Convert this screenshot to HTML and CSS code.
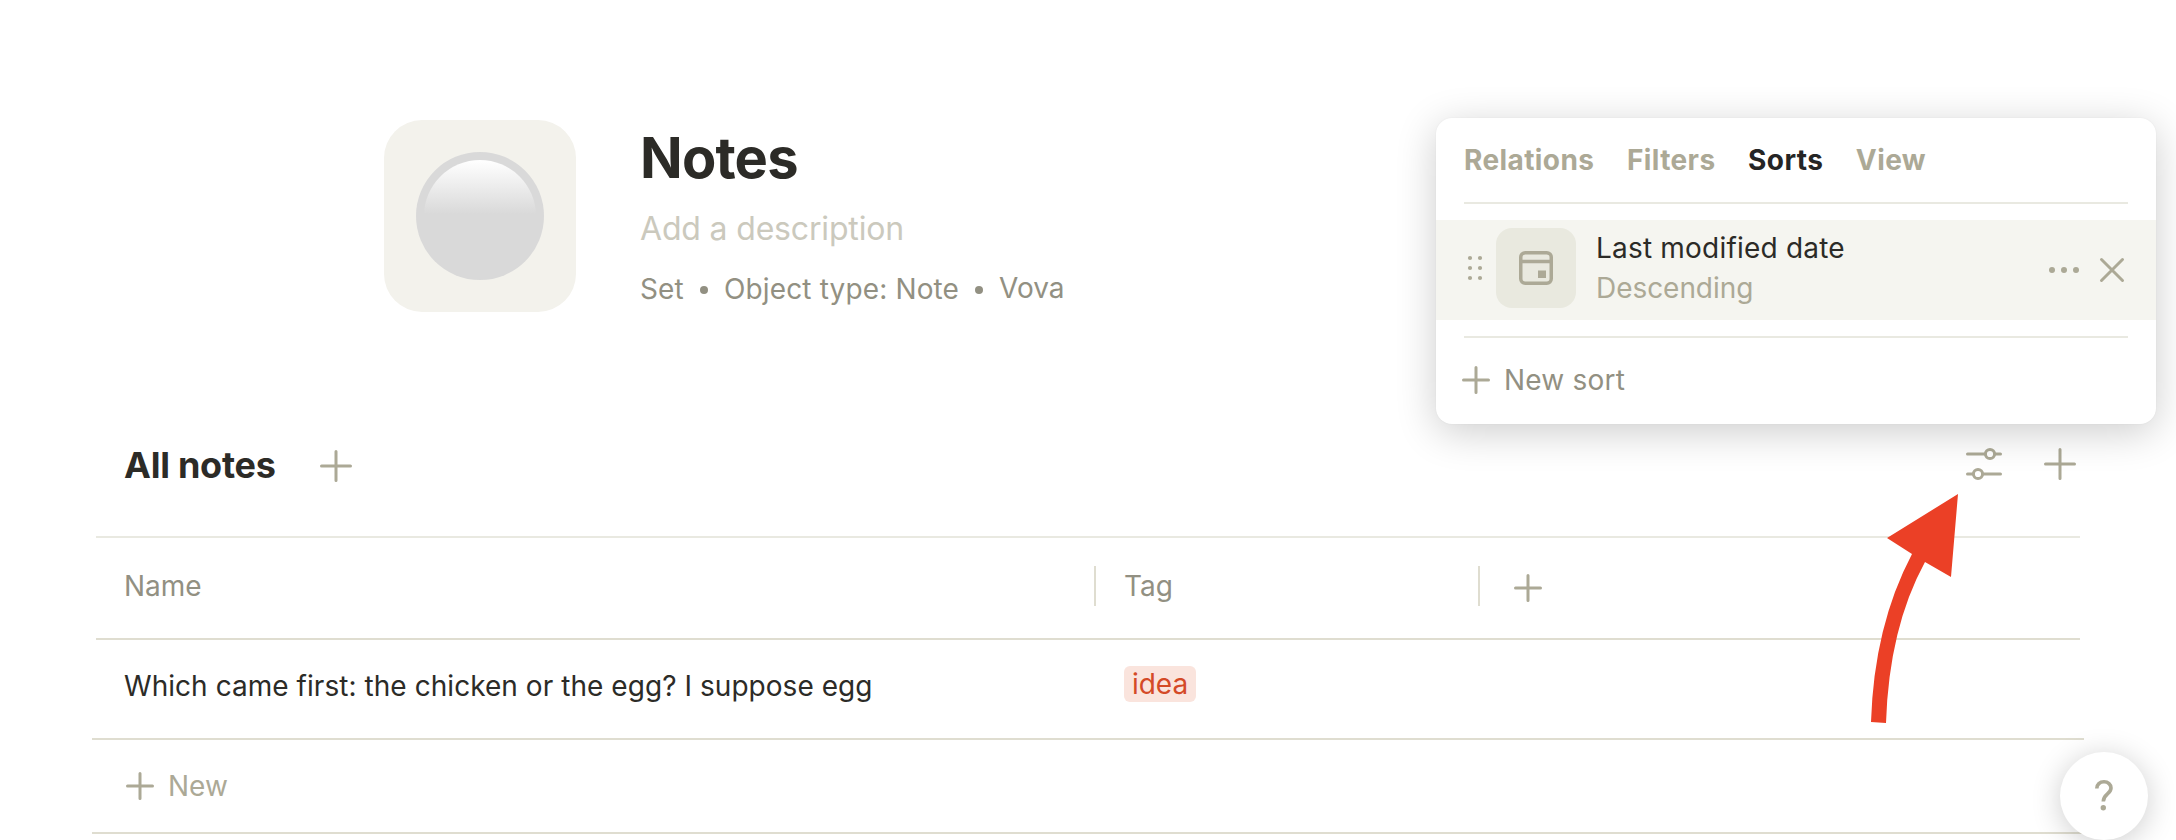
FILE: index.html
```html
<!DOCTYPE html>
<html lang="en">
<head>
<meta charset="utf-8">
<title>Notes</title>
<link rel="stylesheet" href="styles.css">
</head>
<body>
<header class="object">
  <div class="object-icon"><div class="ball"></div></div>
  <div class="object-info">
    <h1 class="title">Notes</h1>
    <p class="description">Add a description</p>
    <div class="meta"><span class="m-set">Set</span><i class="dot"></i><span class="m-type">Object type: Note</span><i class="dot"></i><span class="m-author">Vova</span></div>
  </div>
</header>

<main class="dataview">
  <div class="toolbar">
    <h2 class="view-name">All notes</h2>
    <svg class="plus-lg" viewBox="0 0 32 32"><path d="M16 1.500v29M1.500 16h29"/></svg>
    <span class="spacer"></span>
    <svg class="sliders" viewBox="0 0 36 34"><path d="M1.500 7h18M29 7h5.500M1.500 27h5.500M17 27h17.500"/><circle cx="24" cy="7" r="4.600"/><circle cx="12" cy="27" r="4.600"/></svg>
    <svg class="plus-lg plus-end" viewBox="0 0 32 32"><path d="M16 1.500v29M1.500 16h29"/></svg>
  </div>
  <div class="row head">
    <div class="cell name"><span class="t-name">Name</span></div>
    <div class="cell tag"><span class="t-tag">Tag</span></div>
    <div class="cell add"><svg class="plus" viewBox="0 0 28 28"><path d="M14 1.500v25M1.500 14h25"/></svg></div>
  </div>
  <div class="row item">
    <div class="cell name"><span class="t-item">Which came first: the chicken or the egg? I suppose egg</span></div>
    <div class="cell tag"><span class="chip">idea</span></div>
  </div>
  <div class="row new"><svg class="plus" viewBox="0 0 28 28"><path d="M14 1.500v25M1.500 14h25"/></svg><span class="t-new">New</span></div>
</main>

<section class="popup">
  <nav class="tabs"><span class="tab">Relations</span><span class="tab">Filters</span><span class="tab active">Sorts</span><span class="tab">View</span></nav>
  <div class="sort">
    <svg class="grip" viewBox="0 0 14 24"><circle cx="2" cy="2" r="2.100"/><circle cx="12" cy="2" r="2.100"/><circle cx="2" cy="12" r="2.100"/><circle cx="12" cy="12" r="2.100"/><circle cx="2" cy="22" r="2.100"/><circle cx="12" cy="22" r="2.100"/></svg>
    <div class="sort-icon"><svg class="calendar" viewBox="0 0 34 34"><rect class="line" x="1.750" y="1.750" width="30.500" height="30.500" rx="4.500"/><path class="line" d="M2 10.500h30"/><rect class="day" x="19" y="19.500" width="8" height="7.500"/></svg></div>
    <div class="sort-text"><span class="sort-name">Last modified date</span><span class="sort-dir">Descending</span></div>
    <svg class="more" viewBox="0 0 32 6"><circle cx="3" cy="3" r="3"/><circle cx="15" cy="3" r="3"/><circle cx="27" cy="3" r="3"/></svg>
    <svg class="close" viewBox="0 0 24 24"><path d="M1.500 1.500l21 21M22.500 1.500l-21 21"/></svg>
  </div>
  <div class="new-sort"><svg class="plus" viewBox="0 0 28 28"><path d="M14 1.500v25M1.500 14h25"/></svg><span class="t-sort">New sort</span></div>
</section>

<svg class="arrow" viewBox="0 0 90 232"><path d="M88 2L17 46L42 62Q4 134 1 230L16 231Q19 136 55 70L81 85Z"/></svg>
<div class="help"><svg class="question" viewBox="0 0 20 32"><path d="M1.800 8.500C1.800 4.500 4.800 1.800 9 1.800C13.100 1.800 16 4.400 16 8C16 14 8.300 14 8.300 21.500"/><circle cx="8.300" cy="27.700" r="2.700"/></svg></div>
</body>
</html>
```
FILE: styles.css
```css
* { box-sizing: border-box; }
body { margin: 0; width: 2176px; height: 840px; overflow: hidden; position: relative; background: #fff; color: #2c2b27; font: 400 28px/40px Inter, sans-serif; }
h1, h2, p { margin: 0; }
span, h1, h2, p { white-space: nowrap; }
svg { display: block; flex: none; overflow: visible; fill: none; stroke: #aca996; stroke-width: 3; stroke-linecap: round; }

.object { display: flex; gap: 64px; padding: 120px 0 0 384px; height: 428px; }
.object-icon { width: 192px; height: 192px; border-radius: 38px; background: #f3f2ec; padding: 32px; }
.ball { width: 128px; height: 128px; border-radius: 50%; background: #d9d9d9; padding: 8px; }
.ball::before { content: ""; display: block; width: 112px; height: 112px; border-radius: 50%; background: linear-gradient(#fff 0, #d9d9d9 54px); }
.title { font-size: 56px; line-height: 64px; font-weight: 700; letter-spacing: -.8px; margin-top: 6px; }
.description { font-size: 32px; line-height: 44px; letter-spacing: -.17px; margin-top: 17px; color: #cbc9bd; }
.meta { display: flex; align-items: center; margin-top: 18px; color: #929082; letter-spacing: .15px; }
.dot { width: 8px; height: 8px; border-radius: 50%; background: #929082; margin: 2px 16px 0; }
.m-author { margin-top: -2px; letter-spacing: 0; }

.toolbar { display: flex; align-items: center; height: 108px; padding: 0 100px 34px 124px; }
.view-name { font-size: 36px; line-height: 44px; font-weight: 700; letter-spacing: -.25px; width: 196px; }
.plus-lg { width: 32px; height: 32px; margin-top: 2px; }
.plus-end { margin: -2px 0 0 42px; }
.spacer { flex: 1; }
.sliders { width: 36px; height: 34px; margin-top: -2px; }
.row { display: flex; align-items: center; border-top: 2px solid #dfddd0; }
.head, .item { margin: 0 96px; padding-left: 28px; }
.head { height: 102px; border-color: #e9e9e1; color: #929082; }
.item { height: 100px; }
.name { width: 970px; }
.tag { width: 386px; display: flex; align-items: center; }
.head .tag { width: 384px; height: 40px; border-left: 2px solid #dfddd0; padding-left: 28px; }
.head .name, .head .tag, .head .add { margin-bottom: 4px; }
.item .tag { padding-left: 30px; margin-bottom: 10px; }
.item .name { margin-bottom: 6px; letter-spacing: .05px; }
.add { height: 40px; width: 90px; border-left: 2px solid #dfddd0; padding: 8px 0 0 34px; }
.plus { width: 28px; height: 28px; }
.chip { height: 36px; line-height: 36px; width: 72px; text-align: center; border-radius: 6px; background: #fae4dd; color: #d44a27; }
.new { margin: 0 92px; height: 96px; padding-left: 34px; gap: 14px; border-bottom: 2px solid #dfddd0; color: #aca996; }

.popup { position: absolute; left: 1436px; top: 118px; width: 720px; height: 306px; border-radius: 16px; background: #fff; box-shadow: 0 0 2px rgba(0,0,0,.05), 0 8px 40px rgba(0,0,0,.2); }
.tabs { display: flex; gap: 32.6px; margin: 0 28px; height: 86px; padding-top: 22px; border-bottom: 2px solid #e9e9e1; font-weight: 700; letter-spacing: .4px; color: #aca996; }
.active { color: #252525; }
.sort { display: flex; align-items: center; margin: 16px 0; height: 100px; background: #f5f5f0; padding-left: 32px; }
.grip { width: 14px; height: 24px; margin-top: -4px; fill: #aca996; stroke: none; }
.sort-icon { width: 80px; height: 80px; margin: -4px 20px 0 14px; border-radius: 16px; background: #e9e9df; padding: 23px; }
.calendar { width: 34px; height: 34px; }
.line { stroke-width: 3.5; }
.day { fill: #aca996; stroke: none; }
.sort-text { display: flex; flex-direction: column; flex: 1; margin-top: -4px; }
.sort-name { letter-spacing: .2px; }
.sort-dir { color: #aca996; letter-spacing: -.05px; }
.more { width: 32px; height: 6px; fill: #aca996; stroke: none; margin-right: 19px; }
.close { width: 24px; height: 24px; margin-right: 32px; }
.new-sort { display: flex; align-items: center; gap: 14px; margin: 0 28px; border-top: 2px solid #e9e9e1; height: 86px; color: #929082; letter-spacing: .2px; padding-bottom: 0; }
.new-sort .plus { margin-left: -2px; }

.arrow { position: absolute; left: 1870px; top: 492px; width: 90px; height: 232px; fill: #eb4026; stroke: none; }
.help { position: absolute; left: 2060px; top: 752px; width: 88px; height: 88px; border-radius: 50%; background: #fff; box-shadow: 0 4px 30px rgba(0,0,0,.2); padding: 28px 0 0 35px; }
.question { width: 20px; height: 32px; stroke-width: 3.6; stroke-linecap: butt; }
.question circle { fill: #aca996; stroke: none; }
```
